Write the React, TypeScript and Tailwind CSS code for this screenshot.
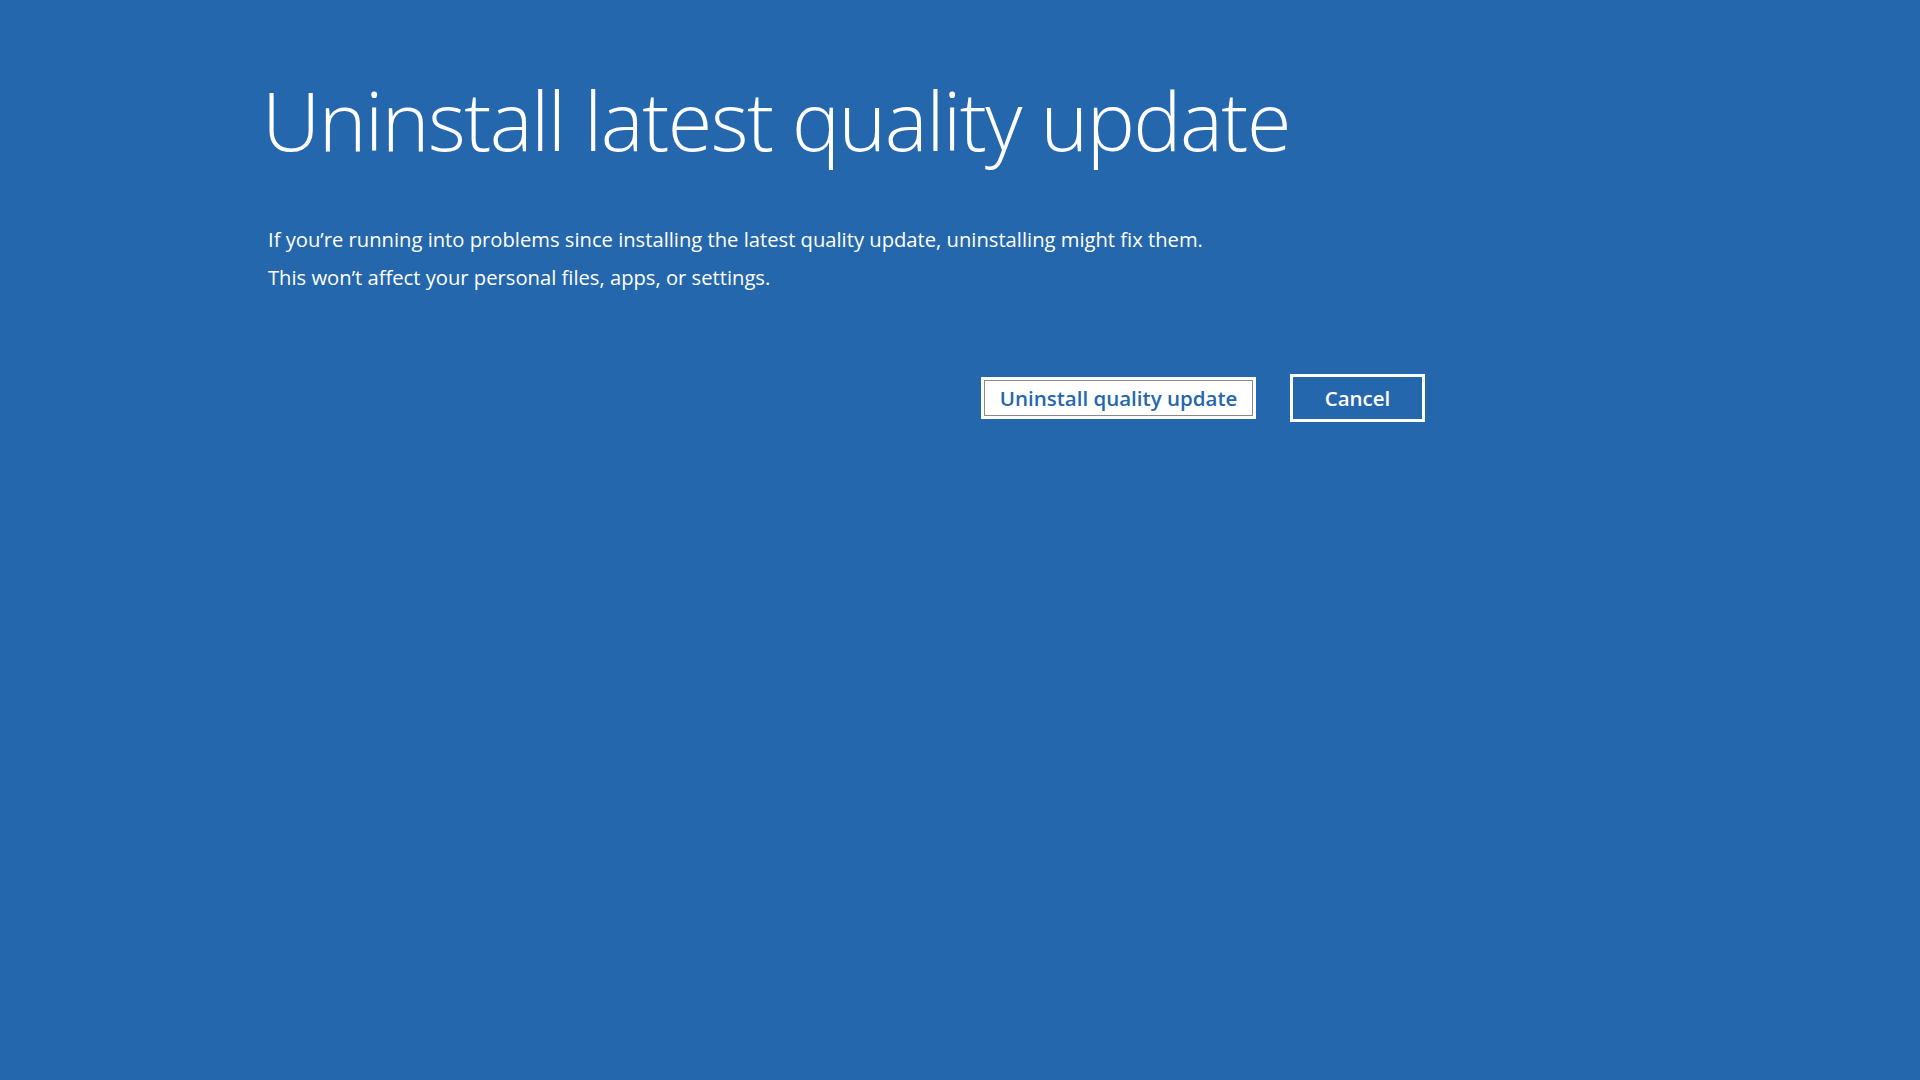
import React from "react";

export default function App() {
  return (
    <div
      className="w-[1920px] h-[1080px] bg-[#2567ad] text-white overflow-hidden"
      style={{ fontFamily: '"Open Sans", "Noto Sans", sans-serif' }}
    >
      <div className="pl-[262px] pt-[70px] w-[1425px] flex flex-col">
        <h1 className="text-[81px] font-light leading-[100px] tracking-[-1.55px]">
          Uninstall latest quality update
        </h1>
        <div className="mt-[50px] pl-[6px] text-[20.2px] leading-[38px]">
          <p>If you’re running into problems since installing the latest quality update, uninstalling might fix them.</p>
          <p>This won’t affect your personal files, apps, or settings.</p>
        </div>
        <div className="mt-[78px] flex justify-end gap-[34px]">
          <button className="mt-[3px] w-[275px] h-[42px] bg-white p-[3px] flex">
            <span className="flex-1 border border-[#8a8a8a] flex items-center justify-center text-[#2567ad] text-[20.5px] font-semibold">
              Uninstall quality update
            </span>
          </button>
          <button className="w-[135px] h-[48px] border-[3px] border-white flex items-center justify-center text-[20.5px] font-semibold text-white">
            Cancel
          </button>
        </div>
      </div>
    </div>
  );
}
